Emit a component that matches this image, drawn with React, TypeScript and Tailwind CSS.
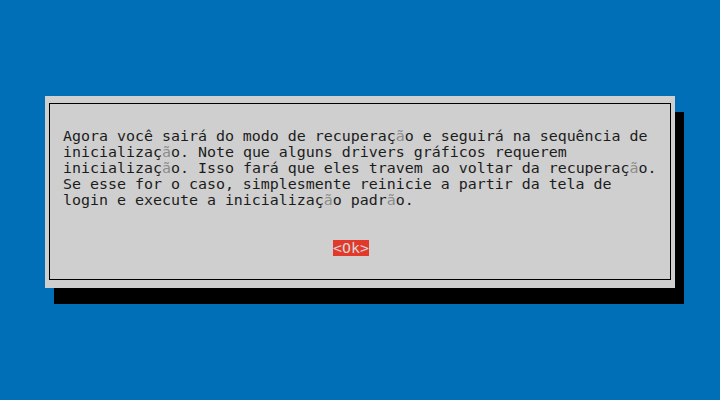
// Whiptail-style recovery dialog (newt look, 80x25 grid of 9x16 cells)

const lines = [
  'Agora você sairá do modo de recuperação e seguirá na sequência de',
  'inicialização. Note que alguns drivers gráficos requerem',
  'inicialização. Isso fará que eles travem ao voltar da recuperação.',
  'Se esse for o caso, simplesmente reinicie a partir da tela de',
  'login e execute a inicialização padrão.',
]

// the "ã" glyph comes out lighter in the original console
function Line({ text }: { text: string }) {
  const parts = text.split('ã')
  return (
    <div className="h-[16px] whitespace-pre">
      {parts.map((p, i) => (
        <span key={i}>
          {p}
          {i < parts.length - 1 && <span className="text-[#8c8c8c]">ã</span>}
        </span>
      ))}
    </div>
  )
}

export default function App() {
  return (
    <div
      className="w-[720px] h-[400px] bg-[#006fb8] pt-[96px] pl-[45px] overflow-hidden"
      style={{ fontFamily: '"DejaVu Sans Mono", "Liberation Mono", monospace' }}
    >
      {/* Dialog */}
      <div className="w-[630px] h-[192px] bg-[#cfcfcf] shadow-[9px_16px_0_0_#000] pt-[7px] pb-[8px] px-[4px]">
        <div className="h-full border border-black pl-[13px] pt-[24px] text-[14.95px] leading-[16px] text-[#1c1c1c]">
          {lines.map((l, i) => (
            <Line key={i} text={l} />
          ))}

          {/* Button */}
          <div className="mt-[32px] ml-[270px] flex">
            <span className="h-[16px] bg-[#e2392b] text-[#d6d6d6] whitespace-pre">{'<Ok>'}</span>
          </div>
        </div>
      </div>
    </div>
  )
}
